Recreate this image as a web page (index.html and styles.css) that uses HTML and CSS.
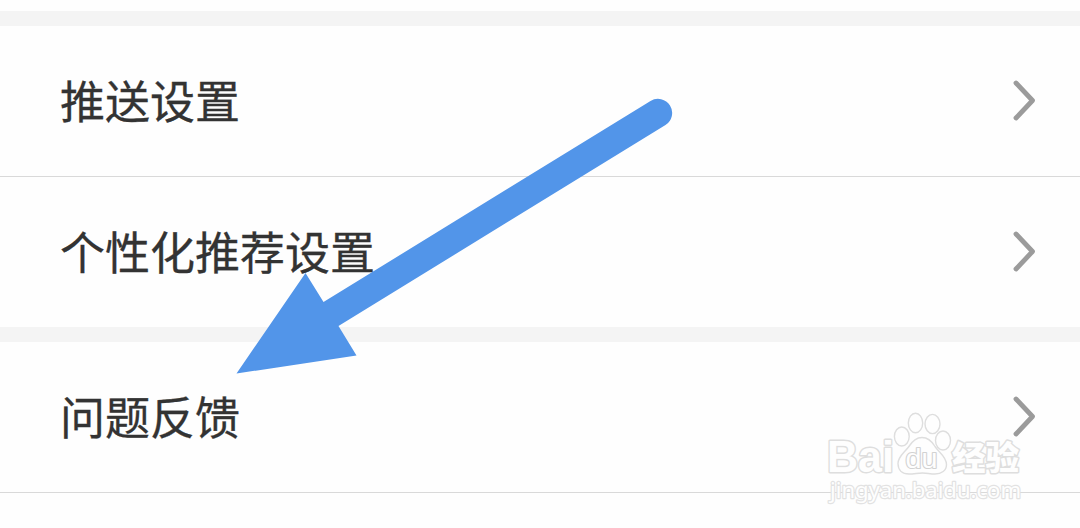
FILE: index.html
```html
<!DOCTYPE html>
<html lang="zh-CN">
<head>
    <meta charset="UTF-8">
    <meta name="viewport" content="width=device-width, initial-scale=1.0">
    <title>设置</title>
    <link rel="stylesheet" href="styles.css">
</head>
<body>
    <main class="settings">
        <section class="group">
            <div class="row">
                <span class="label">推送设置</span>
                <svg class="chevron" viewBox="0 0 24 42"><path d="M4 4 L20.5 21.5 L4 39"/></svg>
            </div>
            <div class="row">
                <span class="label">个性化推荐设置</span>
                <svg class="chevron" viewBox="0 0 24 42"><path d="M4 4 L20.5 21.5 L4 39"/></svg>
            </div>
        </section>
        <section class="group">
            <div class="row">
                <span class="label">问题反馈</span>
                <svg class="chevron" viewBox="0 0 24 42"><path d="M4 4 L20.5 21.5 L4 39"/></svg>
            </div>
            <div class="row row-cut"></div>
        </section>
    </main>

    <svg class="arrow" viewBox="0 0 1080 528">
        <path d="M236.5 373.5 L305.5 273 L323.5 302 L650.5 101 A14 14 0 0 1 665.5 125 L338.5 326 L356.5 355.5 Z"/>
    </svg>

    <svg class="watermark" viewBox="820 400 220 110">
        <text class="brand" x="827" y="472" textLength="67" lengthAdjust="spacingAndGlyphs">Bai</text>
        <ellipse cx="901.8" cy="436.5" rx="7.4" ry="9.5"/>
        <ellipse cx="915.5" cy="423" rx="7.2" ry="9.8"/>
        <ellipse cx="932.5" cy="424" rx="7.5" ry="9.6"/>
        <ellipse cx="943" cy="440.5" rx="7.5" ry="9.5"/>
        <path d="M922 437.5 C928 437.5 932 441.5 935 446.5 C939 452.5 946.5 456.5 946.5 464.5 C946.5 470.5 941.5 474 935 474 C930 474 927 473 922.5 473 C918 473 914 474 909 474 C902 474 898 470 898 463.5 C898 456.5 904 453 908.5 447 C912 441.5 916 437.5 922 437.5 Z"/>
        <text class="du" x="905.5" y="468" textLength="32" lengthAdjust="spacingAndGlyphs">du</text>
        <text class="brand-cn" x="952" y="470" textLength="67" lengthAdjust="spacingAndGlyphs">经验</text>
        <text class="site" x="830" y="498" textLength="191" lengthAdjust="spacingAndGlyphs">jingyan.baidu.com</text>
    </svg>
</body>
</html>
```

FILE: styles.css
```css
* {
    margin: 0;
    padding: 0;
    box-sizing: border-box;
}

body {
    height: 528px;
    position: relative;
    overflow: hidden;
    background: #fefefe;
    color: #333;
    font-family: "Noto Sans CJK SC", sans-serif;
}

.settings {
    padding-top: 11px;
}

.group {
    border-top: 15px solid #f4f4f4;
}

.row {
    display: flex;
    align-items: center;
    justify-content: space-between;
    height: 150px;
    padding: 0 44px 2px 60px;
}

.row + .row {
    height: 151px;
    border-top: 1px solid #d9d9d9;
}

.row + .row-cut {
    height: 36px;
}

.label {
    font-size: 45px;
    line-height: 66px;
    padding-bottom: 1px;
    -webkit-text-stroke: 0.3px #333;
}

.chevron {
    width: 24px;
    height: 42px;
    fill: none;
    stroke: #9b9b9b;
    stroke-width: 4.8;
    stroke-linecap: round;
    stroke-linejoin: round;
}

.arrow {
    position: absolute;
    top: 0;
    left: 0;
    width: 1080px;
    height: 528px;
    fill: #5295e9;
}

.watermark {
    position: absolute;
    top: 400px;
    left: 820px;
    width: 220px;
    height: 110px;
    fill: #fefefe;
    stroke: #dedede;
    stroke-width: 1.4;
}

.watermark text {
    paint-order: stroke;
    stroke-width: 3;
    stroke-linejoin: round;
}

.brand {
    font: bold 44px "Liberation Sans", sans-serif;
}

.watermark .du {
    font: 27px "Liberation Sans", sans-serif;
    stroke: #d2d2d2;
    stroke-width: 2.2;
}

.brand-cn {
    font: 900 33px "Noto Sans CJK SC", sans-serif;
}

.watermark .site {
    font: 22px "Noto Sans", sans-serif;
    stroke: #e2e2e2;
    stroke-width: 2.4;
}
```
